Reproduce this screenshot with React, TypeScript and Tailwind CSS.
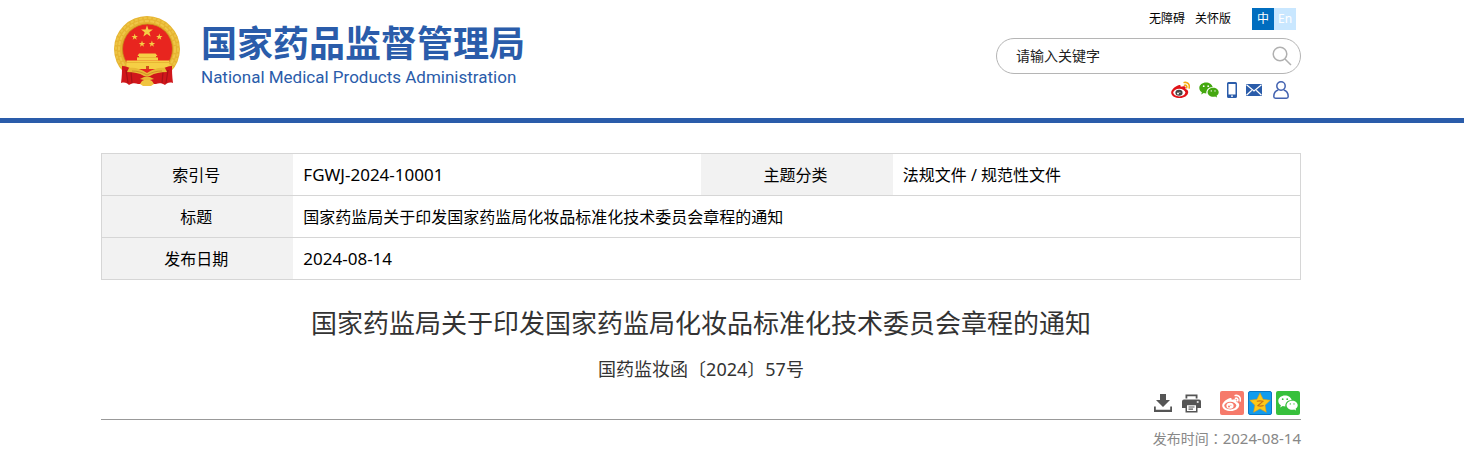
import type { ReactNode } from 'react'

interface IconProps {
  className?: string
}

function starPoints(cx: number, cy: number, r: number) {
  return Array.from({ length: 10 }, (_, i) => {
    const radius = i % 2 === 0 ? r : r * 0.4
    const angle = (Math.PI / 5) * i - Math.PI / 2
    return `${(cx + radius * Math.cos(angle)).toFixed(2)},${(cy + radius * Math.sin(angle)).toFixed(2)}`
  }).join(' ')
}

function Emblem({ className }: IconProps) {
  return (
    <svg viewBox="0 0 68 72" className={className} aria-hidden="true">
      <circle cx="34" cy="34" r="33" fill="#e6b431" />
      <circle cx="34" cy="34" r="31" fill="none" stroke="#edc443" strokeWidth="2" strokeDasharray="3 1.6" />
      <circle cx="34" cy="34" r="28" fill="none" stroke="#efc648" strokeWidth="2" strokeDasharray="4 1.4" />
      <circle cx="34.5" cy="34" r="25" fill="#e8251f" stroke="#c98c1c" strokeWidth="0.8" />
      <g fill="#f5cf45">
        <polygon points={starPoints(34, 16.5, 6.2)} />
        <polygon points={starPoints(21.7, 22, 3.4)} />
        <polygon points={starPoints(46.3, 22, 3.4)} />
        <polygon points={starPoints(29, 29, 3.4)} />
        <polygon points={starPoints(38.9, 29, 3.4)} />
        <path d="M26 38.500h16.500l2 2.500h-1.500v1.500h2v3h-21v-3h2v-1.500h-1.500z" />
        <path d="M13.500 45.500h42.500v5.500l-3 3h-36.500l-3-3z" />
      </g>
      <path d="M14 47.500h42M24 42.500h20" stroke="#e3ab2c" strokeWidth="0.7" />
      <path d="M33 51h3v3h-3z" fill="#d14a1c" />
      <path
        d="M9 51c4 0 8 2 12 4l13 5 13-5c4-2 8-4 12-4 0 5 0 10 1 17-4-1-6 0-8 2-3-2-6-2-9-1H25c-3-1-6-1-9 1-2-2-4-3-8-2 1-7 1-12 1-17z"
        fill="#d0171b"
      />
      <path d="M13 55l2 13M18 57l1 11M55 55l-2 13M50 57l-1 11" stroke="#a81217" strokeWidth="1.200" />
      <path
        d="M16 53c6-1 12 1 18 5 6-4 12-6 18-5l2 4c-7 0-12 1-17 4-2 1-4 1-6 0-5-3-10-4-17-4z"
        fill="#e9b935"
      />
      <path d="M19 56c5 0 10 1 15 4 5-3 10-4 15-4" fill="none" stroke="#c98824" strokeWidth="0.8" />
      <path d="M27 64l4-2h6l4 2-4 1h-6z" fill="#e9b935" />
      <path d="M29 66l2-1h6l2 1 2 3-3 2h-8l-3-2z" fill="#f0c440" />
    </svg>
  )
}

interface WeiboProps extends IconProps {
  body: string
  eye: string
  pupil: string
  wave: string
}

function Weibo({ className, body, eye, pupil, wave }: WeiboProps) {
  return (
    <svg viewBox="0 0 20 18" className={className} aria-hidden="true">
      <path
        d="M7.500 4.200c1.400-.6 2.400-.1 2.200 1.600 1.900-.8 4.400-1 4.900.3.300.7 0 1.300-.2 2 1.900.5 3 1.600 2.800 3.400-.4 3-4 5.500-8.400 5.500-4.500 0-8.300-1.900-8.600-5C0 8.700 4.200 5.300 7.500 4.200z"
        fill={body}
      />
      <ellipse cx="8.300" cy="11.600" rx="6" ry="3.800" fill={eye} />
      <ellipse cx="8" cy="11.800" rx="3.600" ry="3" fill={pupil} />
      <circle cx="7" cy="12.600" r="1" fill={eye} />
      <circle cx="8.900" cy="11.200" r="0.500" fill={eye} />
      <path
        d="M13.200 1.500c3.300-.8 6 2 5 5.500M13.500 4.200c1.700-.4 2.800 1 2.200 2.500"
        fill="none"
        stroke={wave}
        strokeWidth="1.600"
        strokeLinecap="round"
      />
    </svg>
  )
}

function Wechat({ className, eye }: IconProps & { eye: string }) {
  return (
    <svg viewBox="0 0 20 16" className={className} aria-hidden="true">
      <path
        d="M7 .5C3.300.5.300 2.900.300 6c0 1.800 1 3.300 2.600 4.300L2.200 12.400l2.500-1.300c.9.300 1.700.4 2.600.4C7 7.900 10 5 13.700 5.100 13.100 2.400 10.300.5 7 .5z"
        fill="currentColor"
      />
      <path
        d="M19.700 10.300c0-2.500-2.500-4.500-5.500-4.500s-5.600 2-5.600 4.500 2.500 4.500 5.600 4.500c.7 0 1.300-.1 1.900-.3l2 1.100-.5-1.800c1.300-.8 2.100-2.100 2.100-3.500z"
        fill="currentColor"
      />
      <g fill={eye}>
        <circle cx="4.700" cy="4.200" r="0.900" />
        <circle cx="9.200" cy="4.200" r="0.900" />
        <circle cx="12.300" cy="8.900" r="0.700" />
        <circle cx="16" cy="8.900" r="0.700" />
      </g>
    </svg>
  )
}

function Phone({ className }: IconProps) {
  return (
    <svg viewBox="0 0 10 16" className={className} aria-hidden="true">
      <path
        fillRule="evenodd"
        d="M1.500 0h7A1.500 1.500 0 0 1 10 1.500v13A1.500 1.500 0 0 1 8.500 16h-7A1.500 1.500 0 0 1 0 14.500v-13A1.500 1.500 0 0 1 1.500 0zM1.500 2v10.500h7V2zM4 13.500v1.300h2v-1.300z"
        fill="#2a5caa"
      />
    </svg>
  )
}

function Mail({ className }: IconProps) {
  return (
    <svg viewBox="0 0 16 12" className={className} aria-hidden="true">
      <rect width="16" height="12" rx="0.500" fill="#2a5caa" />
      <path
        d="M.5.800L8 7l7.500-6.200M.5 11.200l5.300-5M15.500 11.200l-5.300-5"
        fill="none"
        stroke="#fff"
        strokeWidth="1.200"
      />
    </svg>
  )
}

function User({ className }: IconProps) {
  return (
    <svg viewBox="0 0 16 18" className={className} aria-hidden="true">
      <g fill="none" stroke="#4262b0" strokeWidth="1.500">
        <circle cx="8" cy="5" r="4.200" />
        <path d="M5.300 9C2.500 9.800.8 12.500.8 15.500c0 1.200.6 1.700 1.700 1.700h11c1.100 0 1.700-.5 1.700-1.700 0-3-1.700-5.700-4.500-6.500" />
      </g>
    </svg>
  )
}

function Search({ className }: IconProps) {
  return (
    <svg viewBox="0 0 20 20" className={className} aria-hidden="true">
      <g fill="none" stroke="#b0b0b0" strokeWidth="1.500">
        <circle cx="8" cy="8" r="6.800" />
        <path d="M13 13l6 6" />
      </g>
    </svg>
  )
}

function Download({ className }: IconProps) {
  return (
    <svg viewBox="0 0 18 18" className={className} aria-hidden="true">
      <path d="M6 0h6v6h4L9 13 2 6h4z" fill="#555" />
      <path d="M0 12.500h1.800v3.200h14.400v-3.200H18V18H0z" fill="#555" />
    </svg>
  )
}

function Printer({ className }: IconProps) {
  return (
    <svg viewBox="0 0 19 19" className={className} aria-hidden="true">
      <path d="M3.500 4.500V.5h12v4h-1.800V2.200H5.300v2.300z" fill="#555" />
      <path
        fillRule="evenodd"
        d="M2 5.500h15a2 2 0 0 1 2 2V14h-3.500v4.500h-12V14H0V7.500a2 2 0 0 1 2-2zM5 11.300V17h9v-5.700zM14.800 7.300v1.500h1.800V7.300z"
        fill="#555"
      />
      <path d="M6.500 13h6M6.500 15.200h4.500" stroke="#555" strokeWidth="1.200" />
    </svg>
  )
}

function QzoneStar({ className }: IconProps) {
  return (
    <svg viewBox="0 0 24 24" className={className} aria-hidden="true">
      <path
        d="M12 1l3.400 7 7.800 1-5.700 5.400 1.400 7.800-6.900-3.800-7 3.800 1.400-7.800L.8 9l7.900-1z"
        fill="#fdc818"
        stroke="#e79a10"
        strokeWidth="0.600"
        strokeLinejoin="round"
      />
      <path
        d="M8.500 10c2.500-.5 4.500-.5 7 0l-6 5c2.500.6 4.500.5 6.500-.2"
        fill="none"
        stroke="#c9701a"
        strokeWidth="1.200"
        strokeLinejoin="round"
      />
    </svg>
  )
}

interface IconLinkProps {
  label: string
  className?: string
  children: ReactNode
}

function IconLink({ label, className, children }: IconLinkProps) {
  return (
    <a href="#" aria-label={label} className={className}>
      {children}
    </a>
  )
}

function Header() {
  return (
    <header className="border-b-[5px] border-[#2a5caa]">
      <div className="ml-[101px] flex h-[118px] max-w-[1200px] justify-between">
        <a href="#" className="flex items-start pt-[15px] pl-3 text-[#2a5caa]">
          <Emblem className="h-[72px] w-[68px]" />
          <span className="ml-5 flex flex-col pt-2">
            <span className="text-[36px] leading-[42px] font-bold">国家药品监督管理局</span>
            <span className="font-['Roboto',sans-serif] text-[17px] leading-6">
              National Medical Products Administration
            </span>
          </span>
        </a>

        <div className="flex w-[305px] flex-col pt-2">
          <div className="flex h-[22px] items-center justify-end pr-[5px] text-xs">
            <a href="#">无障碍</a>
            <a href="#" className="ml-[10px]">
              关怀版
            </a>
            <a
              href="#"
              className="ml-[21px] flex size-[22px] items-center justify-center bg-[#006dbf] text-white"
            >
              中
            </a>
            <a href="#" className="flex size-[22px] items-center justify-center bg-[#c9e7ff] text-white">
              En
            </a>
          </div>
          <form className="mt-2 flex h-9 items-center rounded-full border border-[#b5b5b5] pr-2 pl-[19px]">
            <input
              type="text"
              aria-label="请输入关键字"
              placeholder="请输入关键字"
              className="min-w-0 flex-1 text-sm outline-none placeholder:text-[#222]"
            />
            <button type="button" aria-label="搜索">
              <Search className="size-5" />
            </button>
          </form>
          <nav className="mt-[7px] flex h-[18px] items-center justify-end gap-2 pr-3">
            <IconLink label="微博">
              <Weibo className="h-[18px] w-5" body="#e01218" eye="#fff" pupil="#444" wave="#f5a911" />
            </IconLink>
            <IconLink label="微信">
              <Wechat className="h-4 w-5 text-[#45a810]" eye="#fff" />
            </IconLink>
            <IconLink label="移动端">
              <Phone className="h-4 w-[10px]" />
            </IconLink>
            <IconLink label="邮箱" className="ml-px">
              <Mail className="h-3 w-4" />
            </IconLink>
            <IconLink label="个人中心" className="ml-[3px]">
              <User className="h-[18px] w-4" />
            </IconLink>
          </nav>
        </div>
      </div>
    </header>
  )
}

function InfoTable() {
  return (
    <table className="w-full table-fixed border-collapse border border-[#d6d6d6] text-base text-black [&_td]:px-[10px] [&_th]:bg-[#f2f2f2] [&_th]:pr-[3px] [&_th]:font-normal [&_tr]:h-[42px] [&_tr]:border-b [&_tr]:border-[#d6d6d6]">
      <colgroup>
        <col className="w-[16%]" />
        <col className="w-[34%]" />
        <col className="w-[16%]" />
        <col className="w-[34%]" />
      </colgroup>
      <tbody>
        <tr>
          <th scope="row">索引号</th>
          <td className="text-[17px] leading-6">FGWJ-2024-10001</td>
          <th scope="row">主题分类</th>
          <td>法规文件 / 规范性文件</td>
        </tr>
        <tr>
          <th scope="row">标题</th>
          <td colSpan={3}>国家药监局关于印发国家药监局化妆品标准化技术委员会章程的通知</td>
        </tr>
        <tr>
          <th scope="row">发布日期</th>
          <td colSpan={3} className="text-[17px] leading-6">
            2024-08-14
          </td>
        </tr>
      </tbody>
    </table>
  )
}

function ShareBar() {
  return (
    <div className="mt-2 flex h-[29px] items-start justify-end border-b border-[#999] pr-px">
      <button type="button" aria-label="下载" className="flex h-6 items-center">
        <Download className="size-[18px]" />
      </button>
      <button type="button" aria-label="打印" className="ml-[10px] flex h-6 items-center">
        <Printer className="size-[19px]" />
      </button>
      <div className="ml-[19px] flex gap-1">
        <IconLink
          label="分享到微博"
          className="flex size-6 items-center justify-center rounded-xs bg-[#f67a6b]"
        >
          <Weibo className="h-[18px] w-5" body="#fff" eye="#f67a6b" pupil="#fff" wave="#fff" />
        </IconLink>
        <IconLink
          label="分享到QQ空间"
          className="flex size-6 items-center justify-center rounded-xs border border-[#0b77c4] bg-[#129cee]"
        >
          <QzoneStar className="size-[22px]" />
        </IconLink>
        <IconLink
          label="分享到微信"
          className="flex size-6 items-center justify-center rounded-xs bg-[#37c03c]"
        >
          <Wechat className="h-4 w-5 text-white" eye="#37c03c" />
        </IconLink>
      </div>
    </div>
  )
}

export default function App() {
  return (
    <div className="bg-white font-['Noto_Sans','Noto_Sans_CJK_SC',sans-serif] text-black">
      <Header />
      <main lang="zh-CN" className="mt-[30px] ml-[101px] max-w-[1200px]">
        <InfoTable />
        <h1 className="mt-[23px] text-center text-[26px] leading-10 text-[#333]">
          国家药监局关于印发国家药监局化妆品标准化技术委员会章程的通知
        </h1>
        <p className="mt-3 text-center text-lg text-[#333]">国药监妆函〔2024〕57号</p>
        <ShareBar />
        <p className="mt-2 text-right text-sm text-[#888]">
          发布时间
          {/* the traditional glyph keeps the colon centred in its box */}
          <span lang="zh-TW" className="font-['Noto_Sans_CJK_TC',sans-serif]">
            ：
          </span>
          <time className="text-[15px]">2024-08-14</time>
        </p>
      </main>
    </div>
  )
}
